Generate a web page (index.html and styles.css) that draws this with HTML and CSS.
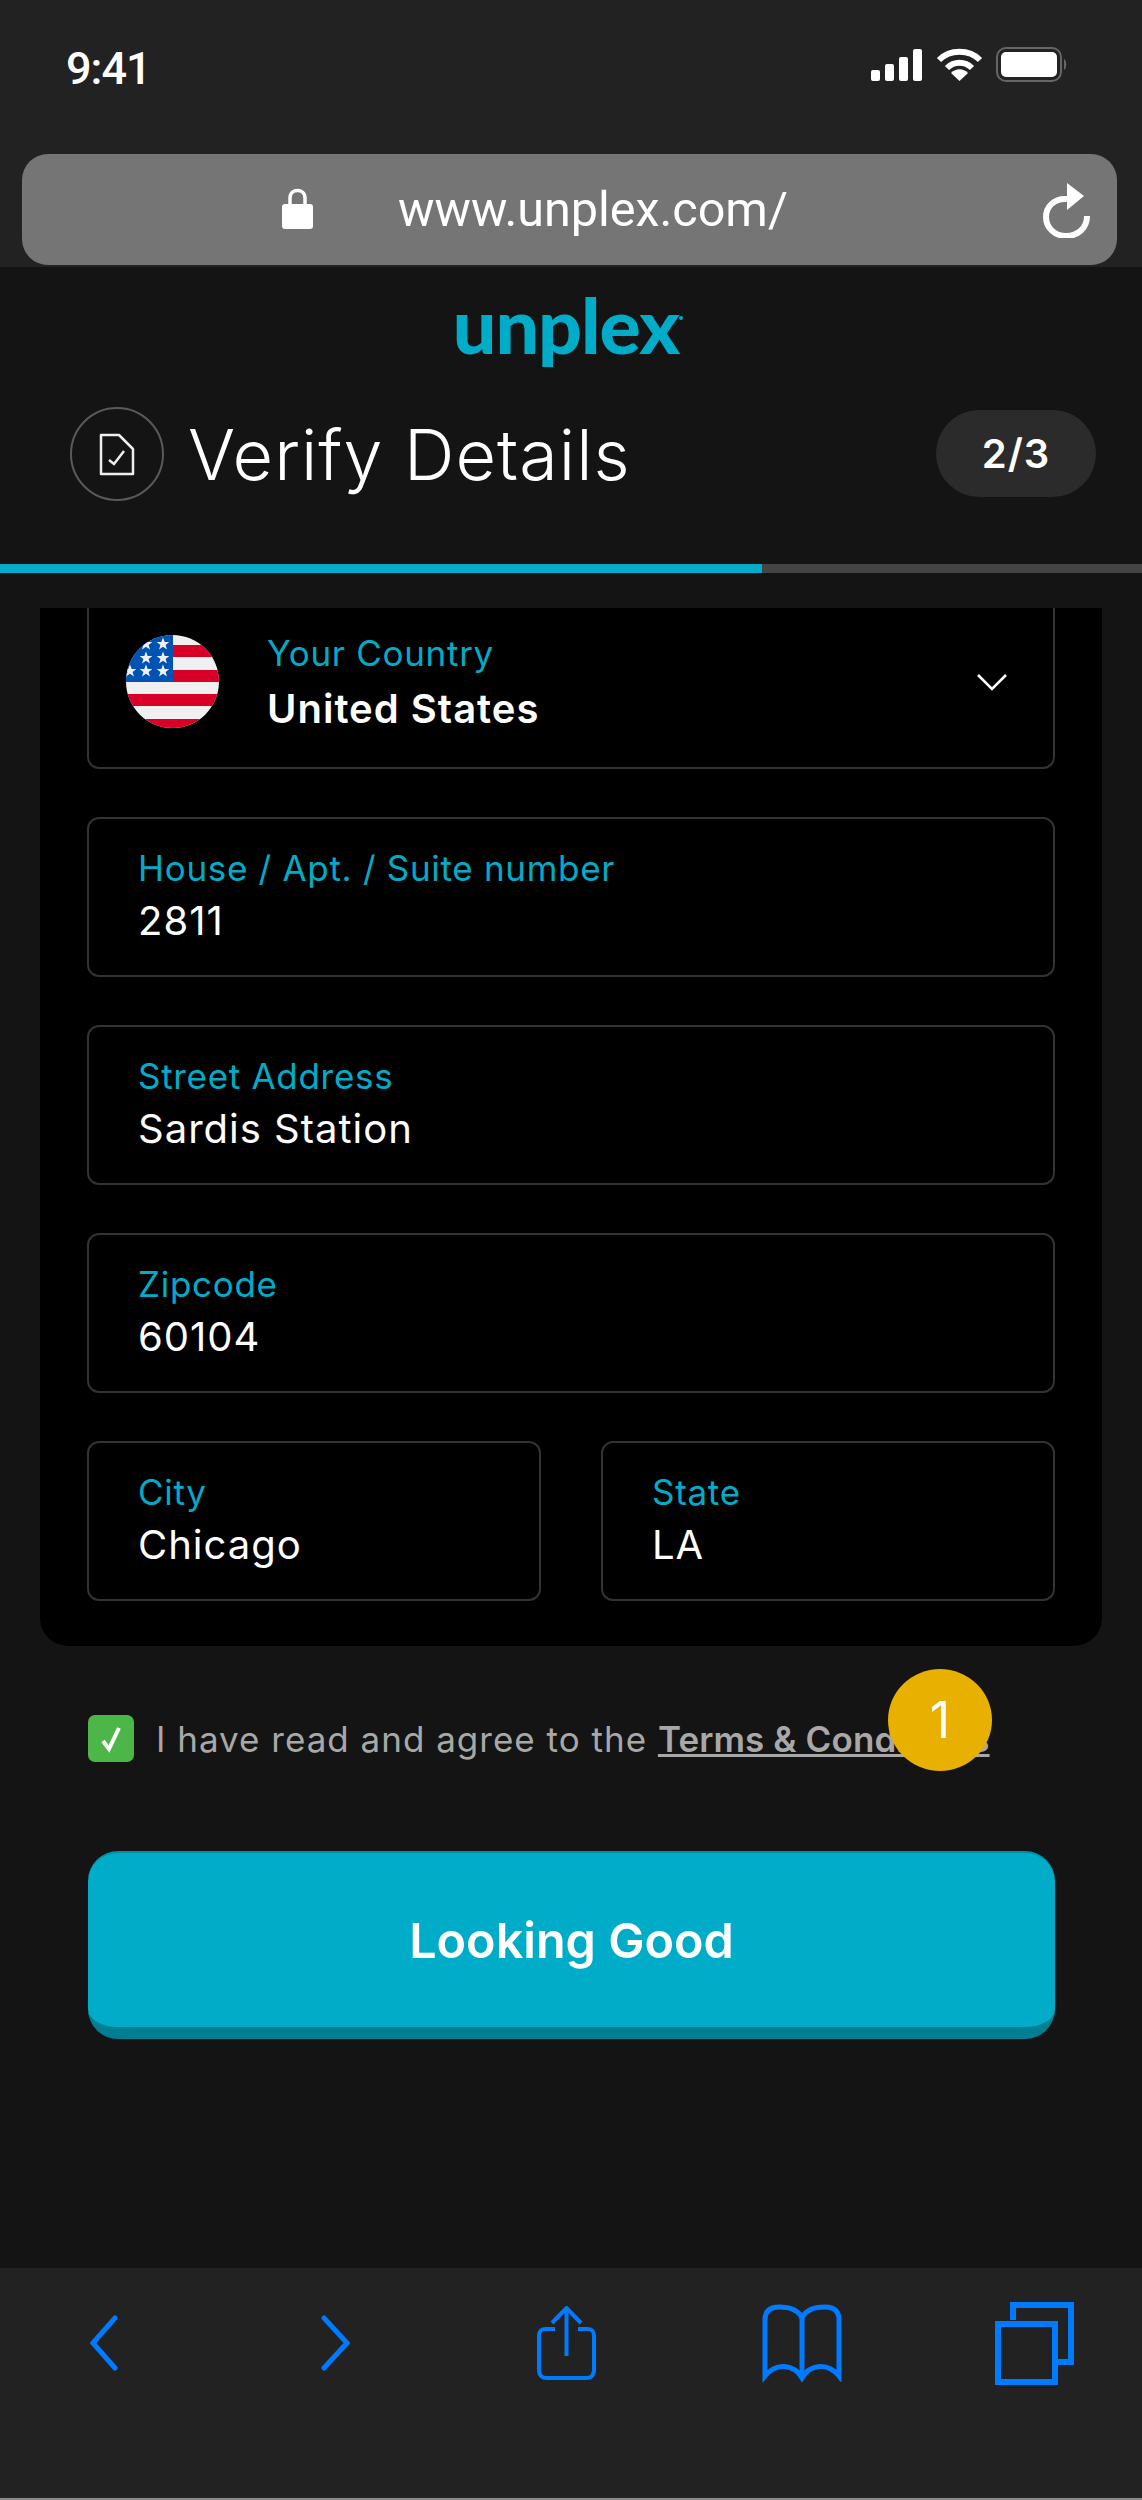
FILE: index.html
```html
<!DOCTYPE html>
<html lang="en">
<head>
    <meta charset="UTF-8">
    <meta name="viewport" content="width=device-width, initial-scale=1.0">
    <title>Unplex - Verify Details</title>
    <link rel="stylesheet" href="styles.css">
</head>
<body>

    <header class="browser-top">
        <div class="status-bar">
            <span class="time">9:41</span>
            <div class="status-icons">
                <svg width="52" height="32" viewBox="0 0 52 32" fill="#fff">
                    <rect x="0" y="21" width="9" height="11" rx="2"/>
                    <rect x="14" y="15" width="9" height="17" rx="2"/>
                    <rect x="28" y="8" width="9" height="24" rx="2"/>
                    <rect x="42" y="0" width="9" height="32" rx="2"/>
                </svg>
                <svg width="47" height="34" viewBox="0 0 47 34" fill="none" stroke="#fff" stroke-width="6">
                    <path d="M3 12 C14 1 33 1 44 12"/>
                    <path d="M11 20 C18 13 29 13 36 20"/>
                    <path d="M23.5 33 L15 25 C20 20 27 20 32 25 Z" fill="#fff" stroke="none"/>
                </svg>
                <svg width="72" height="35" viewBox="0 0 72 35">
                    <rect x="1" y="1" width="64" height="33" rx="9" fill="none" stroke="#666" stroke-width="2"/>
                    <rect x="5" y="5" width="56" height="25" rx="5" fill="#fff"/>
                    <path d="M68 12 C71 13 71 22 68 23 Z" fill="#666"/>
                </svg>
            </div>
        </div>
        <div class="url-bar">
            <svg class="lock" width="31" height="42" viewBox="0 0 31 42">
                <path d="M8 20 V11 C8 1 23 1 23 11 V20" fill="none" stroke="#fff" stroke-width="3.5"/>
                <rect x="0" y="17" width="31" height="25" rx="3" fill="#fff"/>
            </svg>
            <span class="url">www.unplex.com/</span>
            <svg class="reload" width="47" height="55" viewBox="0 0 47 55" fill="none">
                <path d="M24 16 C11 15 3 24 3 34 C3 45 12 53 23 53 C35 53 44 45 44 33" stroke="#fff" stroke-width="6"/>
                <path d="M24 0 L41 13 L24 27 Z" fill="#fff"/>
            </svg>
        </div>
    </header>

    <main class="page">
        <div class="logo">unplex<span class="logo-dot"></span></div>

        <div class="title-row">
            <div class="title-left">
                <div class="title-icon">
                    <svg width="36" height="43" viewBox="0 0 36 43" fill="none" stroke="#eee" stroke-width="2.5">
                        <path d="M2 2 H20 L34 16 V41 H2 Z" stroke-linejoin="round"/>
                        <path d="M10 27 L15 31 L25 18" stroke-width="2.5"/>
                    </svg>
                </div>
                <h1>Verify Details</h1>
            </div>
            <div class="step-pill">2/3</div>
        </div>

        <div class="progress"><div class="progress-fill"></div></div>

        <section class="card">
            <div class="field field-country">
                <svg class="flag" width="93" height="93" viewBox="0 0 93 93">
                    <defs>
                        <clipPath id="flagClip"><circle cx="46.5" cy="46.5" r="46.5"/></clipPath>
                        <polygon id="star" points="0,-6.5 1.7,-2 6.3,-2 2.6,1 4,5.5 0,2.8 -4,5.5 -2.6,1 -6.3,-2 -1.7,-2" fill="#f0f0f0"/>
                    </defs>
                    <g clip-path="url(#flagClip)">
                        <rect width="93" height="93" fill="#f0f0f0"/>
                        <rect x="46" y="10" width="47" height="12" fill="#d80027"/>
                        <rect x="46" y="35" width="47" height="12" fill="#d80027"/>
                        <rect y="59" width="93" height="12" fill="#d80027"/>
                        <rect y="84" width="93" height="9" fill="#d80027"/>
                        <rect width="47" height="47" fill="#0052b4"/>
                        <use href="#star" x="37" y="9"/>
                        <use href="#star" x="20" y="9"/>
                        <use href="#star" x="20" y="23"/>
                        <use href="#star" x="37" y="23"/>
                        <use href="#star" x="20" y="36"/>
                        <use href="#star" x="37" y="36"/>
                        <use href="#star" x="4" y="36"/>
                    </g>
                </svg>
                <div class="country-text">
                    <span class="label">Your Country</span>
                    <span class="value value-strong">United States</span>
                </div>
                <svg class="chevron" width="32" height="19" viewBox="0 0 32 19" fill="none" stroke="#fff" stroke-width="2.5">
                    <path d="M2 2 L16 16 L30 2"/>
                </svg>
            </div>

            <div class="field">
                <span class="label">House / Apt. / Suite number</span>
                <span class="value">2811</span>
            </div>
            <div class="field">
                <span class="label">Street Address</span>
                <span class="value">Sardis Station</span>
            </div>
            <div class="field">
                <span class="label">Zipcode</span>
                <span class="value">60104</span>
            </div>
            <div class="field-row">
                <div class="field">
                    <span class="label">City</span>
                    <span class="value">Chicago</span>
                </div>
                <div class="field">
                    <span class="label">State</span>
                    <span class="value">LA</span>
                </div>
            </div>
        </section>

        <div class="agree">
            <span class="checkbox">
                <svg width="26" height="30" viewBox="0 0 26 30" fill="none" stroke="#fff" stroke-width="4">
                    <path d="M5 17 L11 25 L21 4"/>
                </svg>
            </span>
            <p>I have read and agree to the <a href="#">Terms &amp; Conditions</a></p>
            <span class="badge">1</span>
        </div>

        <button class="primary-btn" type="button">Looking Good</button>
    </main>

    <footer class="browser-bottom">
        <svg width="28" height="56" viewBox="0 0 28 56" fill="none" stroke="#007aff" stroke-width="5" stroke-linecap="round">
            <path d="M25 3 L3 28 L25 53"/>
        </svg>
        <svg width="29" height="56" viewBox="0 0 29 56" fill="none" stroke="#007aff" stroke-width="5" stroke-linecap="round">
            <path d="M3 3 L26 28 L3 53"/>
        </svg>
        <svg width="59" height="74" viewBox="0 0 59 74" fill="none" stroke="#007aff" stroke-width="4">
            <path d="M18 23 H9 C4 23 2 25 2 30 V63 C2 69 4 72 10 72 H49 C55 72 57 69 57 63 V30 C57 25 55 23 50 23 H41"/>
            <path d="M29.5 50 V3 M15 17 L29.5 2 L44 17"/>
        </svg>
        <svg width="80" height="78" viewBox="0 0 80 78" fill="none" stroke="#007aff" stroke-width="5">
            <path d="M40 14 C36 5 27 3 17 3 C7 3 3 8 3 16 V72 C14 58 32 60 40 74 C48 60 66 58 77 72 V16 C77 8 73 3 63 3 C53 3 44 5 40 14 Z"/>
            <path d="M40 14 V74"/>
        </svg>
        <svg width="79" height="83" viewBox="0 0 79 83" fill="none" stroke="#007aff" stroke-width="6">
            <path d="M18 18 V3 H76 V60 H60"/>
            <rect x="3" y="22" width="57" height="58"/>
        </svg>
    </footer>

</body>
</html>
```

FILE: styles.css
```css
* {
    box-sizing: border-box;
}
body {
    margin: 0;
    height: 2500px;
    display: flex;
    flex-direction: column;
    background: #141414;
    font-family: Inter, "Open Sans", sans-serif;
    color: white;
    overflow: hidden;
}

/* browser chrome */
.browser-top {
    height: 267px;
    background: #222222;
    padding: 0 25px 0 22px;
}
.status-bar {
    height: 154px;
    padding: 47px 0 0 44px;
    display: flex;
    justify-content: space-between;
    align-items: flex-start;
}
.time {
    font-family: Roboto, sans-serif;
    font-size: 45px;
    font-weight: 500;
    line-height: 44px;
    letter-spacing: -1px;
}
.status-icons {
    display: flex;
    align-items: center;
    gap: 13px;
    padding-right: 49px;
}
.url-bar {
    height: 111px;
    background: #757575;
    border-radius: 26px;
    display: flex;
    align-items: center;
    padding-left: 260px;
    padding-right: 27px;
}
.lock {
    margin-bottom: 4px;
}
.url {
    font-family: Roboto, sans-serif;
    font-size: 48.5px;
    margin-left: 85px;
    flex: 1;
}
.reload {
    margin-top: 2px;
}

/* page */
.page {
    height: 2001px;
    display: flex;
    flex-direction: column;
    background: #141414;
}
.logo {
    height: 103px;
    padding: 15px 6px 0 0;
    font-family: Lato, sans-serif;
    text-align: center;
    font-size: 77px;
    line-height: 84px;
    font-weight: 900;
    color: #00acc7;
    letter-spacing: -1px;
}
.logo-dot {
    display: inline-block;
    width: 4px;
    height: 4px;
    border-radius: 50%;
    background: #00acc7;
    vertical-align: 34px;
}
.title-row {
    height: 194px;
    padding: 37px 46px 0 70px;
    display: flex;
    justify-content: space-between;
    align-items: flex-start;
}
.title-left {
    display: flex;
    align-items: center;
    gap: 24px;
}
.title-icon {
    width: 94px;
    height: 94px;
    border: 2px solid #5a5a5a;
    border-radius: 50%;
    display: flex;
    align-items: center;
    justify-content: center;
}
h1 {
    margin: 2px 0 0;
    font-size: 70px;
    font-weight: 300;
    line-height: 92px;
    letter-spacing: 1px;
}
.step-pill {
    width: 160px;
    height: 87px;
    margin-top: 3px;
    background: #2b2b2b;
    border-radius: 44px;
    display: flex;
    align-items: center;
    justify-content: center;
    font-size: 40px;
    font-weight: 600;
    letter-spacing: 1px;
}
.progress {
    height: 9px;
    background: #444444;
}
.progress-fill {
    width: 762px;
    height: 100%;
    background: #00acc7;
}

/* form card */
.card {
    height: 1038px;
    margin: 35px 40px 0;
    padding: 0 47px;
    background: black;
    border-radius: 0 0 28px 28px;
    display: flex;
    flex-direction: column;
    gap: 48px;
}
.field {
    height: 160px;
    border: 2px solid #333333;
    border-radius: 12px;
    padding: 28px 0 0 49px;
    display: flex;
    flex-direction: column;
}
.field-country {
    height: 161px;
    border-top: none;
    border-radius: 0 0 12px 12px;
    padding: 27px 45px 0 37px;
    flex-direction: row;
    align-items: flex-start;
}
.flag {
    flex: none;
}
.country-text {
    margin: -3px 0 0 48px;
    flex: 1;
    display: flex;
    flex-direction: column;
}
.chevron {
    margin-top: 38px;
}
.label {
    font-size: 35px;
    line-height: 42px;
    letter-spacing: 0.7px;
    color: #00acc7;
}
.value {
    font-size: 40px;
    line-height: 46px;
    letter-spacing: 1px;
    color: white;
    margin-top: 9px;
}
.value-strong {
    font-weight: 600;
    margin-top: 12px;
}
.field-row {
    display: grid;
    grid-template-columns: 454px 454px;
    justify-content: space-between;
}

/* terms */
.agree {
    position: relative;
    margin: 69px 87px 0 88px;
    height: 47px;
    display: flex;
    align-items: center;
    gap: 22px;
    white-space: nowrap;
}
.checkbox {
    width: 46px;
    height: 47px;
    background: #4cb648;
    border-radius: 7px;
    display: flex;
    align-items: center;
    justify-content: center;
}
.agree p {
    margin: 0;
    font-size: 35px;
    letter-spacing: 1px;
    color: #a8a8a8;
}
.agree a {
    color: #a8a8a8;
    font-weight: 600;
    letter-spacing: 0.1px;
    text-decoration: underline;
}
.badge {
    position: absolute;
    left: 800px;
    top: -46px;
    width: 104px;
    height: 102px;
    border-radius: 50%;
    background: #e8b000;
    display: flex;
    align-items: center;
    justify-content: center;
    font-size: 50px;
    color: white;
}
.primary-btn {
    width: 967px;
    height: 188px;
    margin: 89px 0 0 88px;
    padding: 0;
    background: #00acc7;
    color: white;
    border: none;
    border-top: 2px solid #0090a6;
    border-bottom: 12px solid #007f94;
    border-radius: 30px;
    font-family: inherit;
    font-size: 48.5px;
    font-weight: 600;
    cursor: pointer;
}

/* bottom bar */
.browser-bottom {
    height: 232px;
    background: #222222;
    border-bottom: 2px solid #8a8a8a;
    padding-left: 90px;
    display: grid;
    grid-template-columns: 231px 216px 225px 233px 79px;
    grid-template-rows: 150px;
    align-items: center;
}
```
